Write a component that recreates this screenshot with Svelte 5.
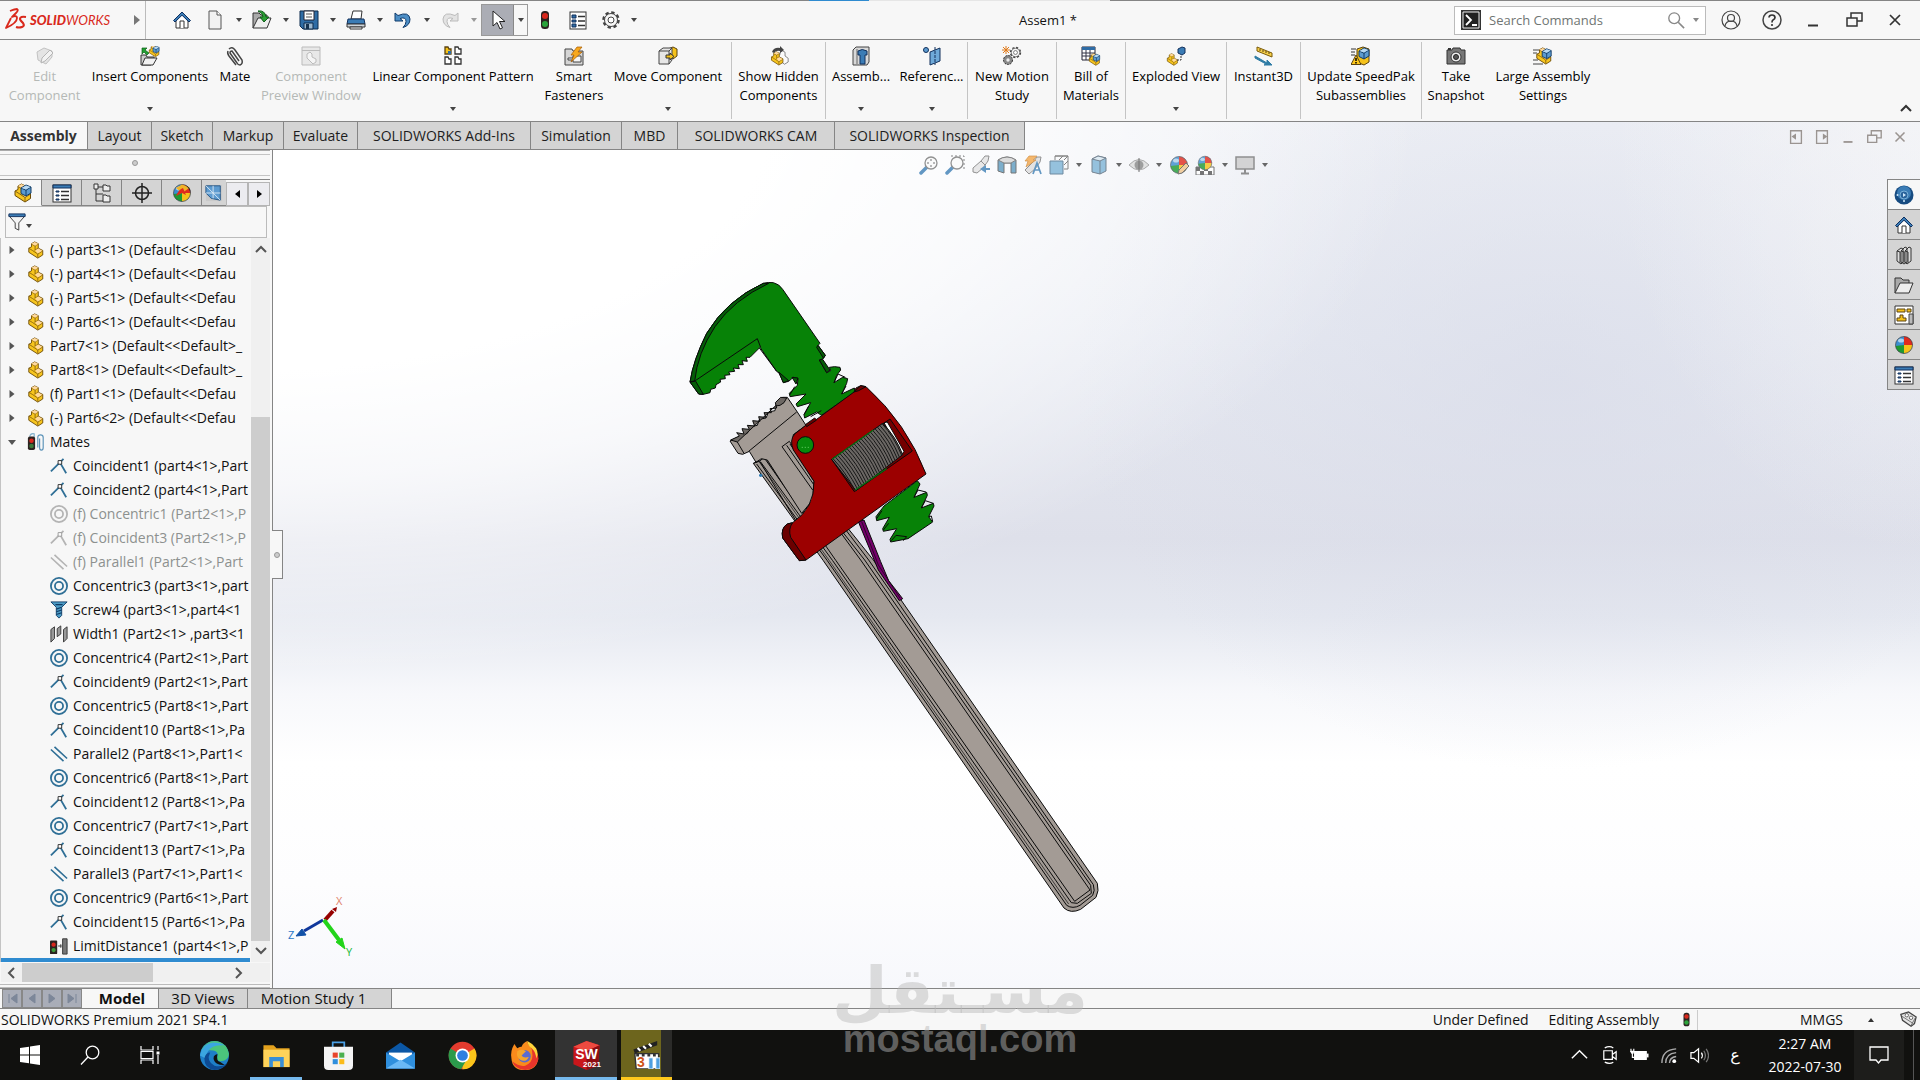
<script>
  const block =
    '<path d="M2 8l3-1.500V3l3.500-2 4 2v5l5 2.500v5L12 19 2 12.500z" fill="#f7c51e" stroke="#6b4a05"/><path d="M2 8l4 2.500 6 4v4M5 3.500l4 2v5.500M9 5.500L12.500 3M12 14.500l5.500-3.500M9 10l3.500-2" fill="none" stroke="#8a6410"/><path d="M5 3l3.500-2 4 2L9 5.200zM9 10.500l3.500-2.200 4.500 2.500-5 3.200z" fill="#ffd9a0"/>';
  const cube =
    '<path d="M8 5l5-3 5 2v6l-5 3-5-2.500z" fill="#5d9bd0" stroke="#123c66"/><path d="M8 5l5 2.200L18 4M13 7v6" fill="none" stroke="#123c66"/><path d="M8.500 5L13 2.500 17.500 4 13 6.500z" fill="#b9d9f2"/>';
  const house =
    '<path d="M4 9v9h12V9l-6-6z" fill="#fff" stroke="#333"/><path d="M8 18v-7h4v7" fill="#fff" stroke="#333"/><path d="M1.500 10.500L10 2l8.500 8.500-1.500 1.500L10 5.200 3 12z" fill="#3b7cb5" stroke="#0f3060"/>';
  const ball =
    '<circle cx="10" cy="10" r="8.500" fill="#3c8ed0"/><path d="M10 10V1.500A8.500 8.500 0 0 1 18.500 10z" fill="#e02a1e"/><path d="M10 10h8.500A8.500 8.500 0 0 1 10 18.500z" fill="#f5c21a"/><path d="M10 10v8.500A8.500 8.500 0 0 1 1.500 11z" fill="#1e9a32"/><ellipse cx="7" cy="5.500" rx="3" ry="2" fill="#fff" opacity=".6"/><circle cx="10" cy="10" r="8.500" fill="none" stroke="#444" stroke-opacity=".7"/>';
  const list =
    '<rect x="2" y="2" width="16" height="17" fill="#fff" stroke="#333"/><path d="M4 5h4v3H4zM4 10h4v2H4zM4 14h4v3H4z" fill="#2f6ca5" stroke="#12305c"/><path d="M10 6.500h7M10 11h7M10 15.500h7" stroke="#333" stroke-width="1.500"/>';
  const folder =
    '<path d="M1 18V3h6l2 2h6v3" fill="#aaa" stroke="#333"/><path d="M1 18L6 8h13l-4 10z" fill="#eee" stroke="#333"/>';
  const page = '<path d="M4 1h8l4 4v14H4z" fill="#f2f2f2" stroke="#555"/><path d="M12 1v4h4" fill="#fff" stroke="#555"/>';
  const gear =
    '<circle cx="10" cy="10" r="7.500" fill="none" stroke="#444" stroke-width="2.500" stroke-dasharray="3.300 2.590"/><circle cx="10" cy="10" r="6.500" fill="#f7f7f7" stroke="#444"/><circle cx="10" cy="10" r="3" fill="#fff" stroke="#444"/>';
  const light =
    '<rect x="6" y="1" width="8" height="18" rx="3.500" fill="#2c2320"/><circle cx="10" cy="6" r="3" fill="#d9281c"/><circle cx="10" cy="14" r="3" fill="#2aa33a"/>';
  const lens = '<path d="M8 12l-6 6" stroke="#3d7fb5" stroke-width="3.500" stroke-linecap="round"/><circle cx="12" cy="8" r="6" fill="#fafafa" stroke="#777" stroke-width="1.300"/>';

  const icons = {
    home: house,
    page,
    open: folder + '<path d="M6 1q7-1 8 6h3l-5 5-4-5h3q0-4-5-6z" fill="#2a9e34" stroke="#0d5c17"/>',
    save: '<path d="M1 1h18v18H4l-3-3z" fill="#2f6ca5" stroke="#0d2a4d"/><path d="M5 1h10v9H5z" fill="#fff" stroke="#223"/><path d="M7 4h6M7 7h6" stroke="#555"/><path d="M5 13h9v6H5z" fill="#9bb7cf" stroke="#0d2a4d"/><path d="M7 14h3v5H7z" fill="#16324f"/>',
    print: '<path d="M5 9L7 1h9l-1 8z" fill="#fff" stroke="#333"/><path d="M2 9h16l1 5H1z" fill="#3b7cb5" stroke="#12305c"/><path d="M1 14h18v3H1z" fill="#cfd6dc" stroke="#333"/><path d="M4 17h12v2H4z" fill="#fff" stroke="#333"/>',
    undo: '<path d="M2 3v8h8L7 8.500q6-2 6 3 0 3-3 6 7-2 7-8.500Q16 1 5 5.500z" fill="#4c8ec6" stroke="#0f3a6b"/>',
    redo: '<path d="M18 3v8h-8l3-2.500q-6-2-6 3 0 3 3 6-7-2-7-8.500Q4 1 15 5.500z" fill="#e3e3e3" stroke="#bbb"/>',
    cursor: '<path d="M5 1v15l4-3.500 3 6.500 2.500-1.200L11.500 11.500H17z" fill="#fff" stroke="#222"/>',
    light,
    list,
    gear,
    edit: '<path d="M2 6l7-4 8 3v6l-6 7-8-4z" fill="#e4e4e4" stroke="#c2c2c2"/><path d="M6 17l1-5 8-8 3 3-8 8z" fill="#f2f2f2" stroke="#b5b5b5"/>',
    insert: '<g transform="translate(8 -1) scale(.62)">' + block + cube + '</g><path d="M1 19V9h5l1 2h7v2l-3 6z" fill="#ccc" stroke="#333"/><path d="M2 19l3-7h12l-4 7z" fill="#f2f2f2" stroke="#333"/><path d="M2 8V2h5L5 4l4 3-2 2-3-3z" fill="#22a032" stroke="#0d5c17" stroke-width=".7"/>',
    clip: '<path d="M4 3q3-3 6 1l7 10q1 4-2 5-2 0-3-2L5 7q0-2 2-2l7 10" fill="none" stroke="#444" stroke-width="1.500"/><path d="M3 5q-1 2 1 5l7 9" fill="none" stroke="#444" stroke-width="1.500"/>',
    preview: '<path d="M1 1h18v18H1z" fill="#e8e8e8" stroke="#bbb"/><path d="M1 4.500h18" stroke="#bbb"/><path d="M6 12V8l3-2 2 2v3l4 2v3l-3 2z" fill="#f5f5f5" stroke="#bbb"/>',
    pattern: '<path d="M2 1h3l1 2h2v5H2z" fill="#f5c21a" stroke="#5b4310" stroke-width="1.300"/><path d="M12 1h3l1 2h2v5h-6zM2 11h3l1 2h2v5H2zM12 11h3l1 2h2v5h-6z" fill="#fff" stroke="#333" stroke-width="1.300"/><path d="M5 5h3v3H5z" fill="#2f6ca5"/>',
    smart: '<path d="M1 3h7l1 2h10v14H1z" fill="#d5d5d5" stroke="#444"/><path d="M4 12h5v-2h8v6H9v-2H4z" fill="#f5f5f5" stroke="#444"/><path d="M13 1h5l-4 5h4L7 16l3-7H7z" fill="#f7a81e" stroke="#a35a05" stroke-width=".7"/>',
    move: '<path d="M10 3l5-2 4 2v7l-4 3z" fill="#f5c21a" stroke="#5b4310"/><path d="M1 5l4-3h9v12l-3 4H1z" fill="#e6e6e6" stroke="#444"/><path d="M1 5h10v13M11 5l3-3" fill="none" stroke="#444"/><path d="M8 9h4V7l4 3.500-4 3.500v-2H8z" fill="#f5c21a" stroke="#333"/>',
    hidden: '<g transform="translate(8 4) scale(.62 .75)"><path d="M2 8l3-2V3l4-2 4 2v5l5 3v5L12 19 2 12z" fill="#fafafa" stroke="#555"/></g><g transform="translate(1 5) scale(.74)">' + block + '</g><path d="M3 6q2-5 8-4V0l4 4-4 3V5Q7 4 5 7z" fill="#444"/>',
    feature: '<path d="M2 4l3-3h13v15l-2 3H2z" fill="#d8d8d8" stroke="#444"/><path d="M6 3v15" stroke="#666"/><path d="M7 5q4-3 9 0v4h-2v9H9V9H7z" fill="#3b7cb5" stroke="#12305c"/>',
    reference: '<circle cx="4" cy="4" r="2.500" fill="#5d9bd0" stroke="#12305c"/><path d="M8 6l10-4v13L8 19z" fill="#6ea9d8" stroke="#12305c"/><path d="M13 1v18" stroke="#12305c" stroke-dasharray="3 1"/>',
    motion: '<g transform="translate(7 0) scale(.65)">' + gear + '</g><circle cx="6" cy="14" r="4.500" fill="#888" stroke="#333" stroke-dasharray="2 1"/><circle cx="6" cy="14" r="1.700" fill="#eee"/><path d="M4 0v8M0 4h8M1 1l6 6M7 1L1 7" stroke="#e07a1a"/>',
    bom: '<path d="M1 1h13v13H1z" fill="#fff" stroke="#223"/><path d="M1 1h13v3H1z" fill="#2f6ca5"/><path d="M1 7h13M1 10h13M5 4v10M9 4v10" stroke="#334"/><g transform="translate(7 7) scale(.65)">' + block + cube + '</g>',
    exploded: '<g transform="translate(0 7) scale(.65)">' + block + '</g><path d="M12 3l4-2 3 1v5l-3 2-4-2z" fill="#3b7cb5" stroke="#12305c"/><path d="M15 10v4h-4" fill="none" stroke="#333" stroke-dasharray="2 1"/>',
    instant: '<path d="M3 1l15 6v4L3 5z" fill="#f7d04a" stroke="#7a5a08"/><path d="M6 3v2M9 4v2M12 5v2M15 6v2" stroke="#5b4310"/><path d="M1 10l12 7v-3l5 5h-8l2-1-11-6z" fill="#2f7ca5" stroke="#2f7ca5"/>',
    speedpak: '<path d="M6 3l6-2 6 2v13l-5 3-7-3z" fill="#f5c21a" stroke="#5b4310"/>' + cube + '<path d="M0 3h5M0 6h4M0 9h4" stroke="#333"/><path d="M5 9l5 9.500H0z" fill="#ffc91c" stroke="#5b4310"/><path d="M5 12v3M5 16v1.500" stroke="#000" stroke-width="1.500"/>',
    camera: '<path d="M1 4h5l1-2h7l1 2h4v14H1z" fill="#777" stroke="#333"/><circle cx="10" cy="11" r="5" fill="#eee" stroke="#333"/><circle cx="10" cy="11" r="2.500" fill="#555" stroke="#222"/><path d="M2 2h3v2H2z" fill="#333"/>',
    large: '<path d="M0 4h6M0 7h4M0 14h5M0 18h10" stroke="#444"/><g transform="translate(2 1) scale(.9)">' + block + cube + '</g>',
    assembly: block + cube,
    part: block,
    props: '<rect x="1" y="2" width="18" height="17" fill="#fff" stroke="#333"/><path d="M1 2h18v3H1z" fill="#3b7cb5" stroke="#12305c"/><path d="M4 8h3v1H4zM4 12h3v1H4zM4 16h3v1H4z" fill="#3b7cb5" stroke="#12305c"/><path d="M9 8.500h8M9 12.500h8M9 16.500h8" stroke="#333" stroke-width="1.500"/>',
    config: '<path d="M4 1v17h7M4 4h7M4 11h7" fill="none" stroke="#333"/><path d="M2 1h4v5H2zM11 2h3l1 1h3v5h-7zM11 12h3l1 1h3v6h-7z" fill="#eee" stroke="#333"/>',
    target: '<circle cx="10" cy="10" r="6.500" fill="none" stroke="#222" stroke-width="1.500"/><path d="M10 0v20M0 10h20" stroke="#222" stroke-width="1.500"/>',
    ball,
    beach: ball + '<path d="M10 10L4 5l6-3.500 8 3z" fill="#f0b428"/><path d="M13 2q6 2 5.500 8-1-5-5.500-8z" fill="#222"/><path d="M10 10L4 13q3-7 7-8l3 7z" fill="#e02a1e"/>',
    cam: '<path d="M1 1h18v18H1z" fill="#c9c9c9"/><path d="M1 2h16v16l-10-2-6-6z" fill="#5d9bd0" stroke="#205080"/><path d="M1 10h16M9 2v14M1 2l16 16" stroke="#dcebf6"/>',
    filter: '<path d="M1 3h18l-7 8v8l-4-2v-6z" fill="#f3f3f3" stroke="#333"/><path d="M1 1h18v3H1z" fill="#3b7cb5" stroke="#12305c"/>',
    mates: '<path d="M12 16V5q0-3 3-3t3 3v11q0 3-2 3t-2-3V6" fill="none" stroke="#5c93b8" stroke-width="1.300"/><path d="M3 4q1-4 5-3v4" fill="none" stroke="#7fb0cc" stroke-width="1.300"/><rect x="1" y="4" width="8" height="15" rx="2" fill="#2c2320"/><circle cx="5" cy="8.500" r="2.500" fill="#d9281c"/><circle cx="5" cy="14.500" r="2.500" fill="#3c7a3a"/>',
    coincident: '<path d="M1 16L15 2M11 6l7 12" stroke="#2f6f96" stroke-width="2"/><path d="M9 4h4v4H9z" fill="#fff" stroke="#222"/>',
    concentric: '<circle cx="10" cy="10" r="9" fill="none" stroke="#2f6f96" stroke-width="2"/><circle cx="10" cy="10" r="4.500" fill="none" stroke="#2f6f96" stroke-width="2"/>',
    parallel: '<path d="M5 2l14 13M1 5l14 13" stroke="#2f6f96" stroke-width="1.800"/>',
    screw: '<path d="M1 1h18l-6 6v9l-3 3-3-3V7z" fill="#4c9cc6" stroke="#103c66"/><path d="M6 4h8M7 9l6-2M7 12l6-2M7 15l6-2" stroke="#103c66" stroke-width="1.300"/>',
    width: '<path d="M1 5l4-3v13l-4 4zM15 5l4-3v13l-4 4zM8 4l4-3v9l-4 3z" fill="#999" stroke="#333"/>',
    limit: '<rect x="0" y="4" width="8" height="15" rx="1" fill="#2c2320"/><circle cx="4" cy="8.500" r="2.400" fill="#d9281c"/><circle cx="4" cy="14.500" r="2.400" fill="#3c9a3a"/><path d="M9 10h4M12 8v4M14 2h5v17h-5z" fill="#777" stroke="#333"/>',
    zoomfit: lens + '<path d="M12 4v8M8 8h8" stroke="#555" stroke-dasharray="2 4"/>',
    zoomarea: '<path d="M6 1h13v14" fill="none" stroke="#666" stroke-dasharray="2 2"/>' + lens,
    prev: '<path d="M2 13l8-7 4-5h4l-1 5-5 7-6 5-4-1z" fill="#e3e3e3" stroke="#777"/><path d="M10 6l4 4" stroke="#777"/><path d="M19 15h-4v3l-6-4 6-4v3h4z" fill="#3d7fb5"/>',
    section: '<path d="M1 5q9-6 18 0v13h-5V8H7v10l-6-2z" fill="#5d9bc0" stroke="#555"/><path d="M1 5q9-6 18 0l-5 3H7z" fill="#d6d6d6" stroke="#666"/>',
    annot: '<path d="M2 15l8-8 4-5h4l-1 5-5 7-6 5z" fill="#ddd" stroke="#777"/><path d="M6 1h8l-4 4h3L3 12l2-6H2z" fill="#f3a74a" stroke="#c77a20" stroke-width=".7"/><path d="M10 19l4-11 4 11M12 15h5" fill="none" stroke="#3d7fb5" stroke-width="1.700"/>',
    orient: '<path d="M6 5V1h13v13h-4M6 1l13 0M10 5l4-4M15 10l4-4M15 5l4-4" fill="none" stroke="#666" /><path d="M1 6h13v13H1z" fill="#7db4d6" stroke="#4d6f88"/>',
    style: '<path d="M3 4l6-3 8 2v13l-6 3-8-2z" fill="#7db4d6" stroke="#567"/><path d="M3 4l8 2 6-3-8-2z" fill="#d8e8f2" stroke="#567"/><path d="M11 6v13" stroke="#567"/>',
    eye: '<path d="M0 10q10-11 20 0-10 10-20 0z" fill="#ddd" stroke="#999"/><circle cx="10" cy="10" r="4.500" fill="#888"/><path d="M10 3v14" stroke="#555"/>',
    appear: ball + '<path d="M9 19l1-4 7-7 3 3-7 7z" fill="#f1c58a" stroke="#555"/>',
    scene: '<path d="M1 12h18v8H1z" fill="#fff" stroke="#555"/><path d="M1 12h4v4H1zM9 12h4v4H9zM5 16h4v4H5zM13 16h4v4h-4z" fill="#555"/><g transform="translate(2 0) scale(.8)">' + ball + '</g>',
    monitor: '<path d="M1 2h18v12H1z" fill="#ccc" stroke="#777" stroke-width="1.500"/><path d="M10 14v4M6 18.500h8" stroke="#777" stroke-width="2"/>',
    user: '<circle cx="10" cy="10" r="9" fill="none" stroke="#444" stroke-width="1.200"/><circle cx="10" cy="8" r="3.500" fill="none" stroke="#444" stroke-width="1.200"/><path d="M4 16q1-5 6-5t6 5" fill="none" stroke="#444" stroke-width="1.200"/>',
    help: '<circle cx="10" cy="10" r="9" fill="none" stroke="#444" stroke-width="1.500"/><path d="M7 7.500Q7.200 5 10 5t3 2.500Q13 9 11 10q-1 .5-1 2.500" fill="none" stroke="#333" stroke-width="1.700"/><circle cx="10" cy="15" r="1.100" fill="#333"/>',
    min: '<path d="M5 15.500h10" stroke="currentColor" stroke-width="2"/>',
    restore: '<path d="M7 8V3h11v8h-5M3 8h10v8H3z" fill="none" stroke="currentColor" stroke-width="1.500"/>',
    close: '<path d="M5 5l10 10M15 5L5 15" stroke="currentColor" stroke-width="1.700"/>',
    paneL: '<path d="M4 3h12v14H4z" fill="none" stroke="currentColor" stroke-width="1.500"/><path d="M10 6v7L5 9.500z" fill="currentColor"/>',
    paneR: '<path d="M4 3h12v14H4z" fill="none" stroke="currentColor" stroke-width="1.500"/><path d="M11 6v7l5-3.500z" fill="currentColor"/>',
    globe: '<circle cx="10" cy="10" r="9.500" fill="#164b80"/><circle cx="10" cy="8" r="7" fill="#3b7cb5"/><circle cx="10" cy="10" r="4" fill="#2a639b" stroke="#79b0d8"/><path d="M9 8v4l3-2z" fill="#cfe8fa"/><circle cx="10" cy="16" r="1" fill="#cfe8fa"/><circle cx="3.500" cy="10" r="1" fill="#cfe8fa"/>',
    books: '<path d="M3 6l4-3 2 1v13l-2 2-4-3zM7 6l4-4 2 1v14l-3 2-3-2zM11 6l4-4 2 1v13l-4 3-2-2z" fill="#ddd" stroke="#333"/><path d="M3 6l3 1v11M7 6l3 1v11M11 6l3 1v11" fill="none" stroke="#333"/>',
    folder,
    palette: '<path d="M1 1h18v18H1z" fill="#fff" stroke="#333"/><path d="M3 4h8v3H3zM13 4h4v3h-4zM3 16v-3h3v-3h3v3h3v3z" fill="#f5c21a" stroke="#5b4310"/><path d="M15 9h4v10h-4z" fill="#bbb" stroke="#444"/>',
    term: '<path d="M0 0h20v20H0z" fill="#333"/><path d="M2 2h16v16H2z" fill="#222" stroke="#eee"/><path d="M5 5l5 5-5 5M11 15h5" fill="none" stroke="#fff" stroke-width="1.800"/>',
    search: '<circle cx="8" cy="8" r="6" fill="none" stroke="#888" stroke-width="1.500"/><path d="M12.500 12.500L19 19" stroke="#888" stroke-width="1.800"/>',
    tag: '<path d="M1 4l9-3 9 6-2 8-4 3-10-7z" fill="#e4e4e4" stroke="#444" stroke-width="1.500"/><path d="M2 6l14 9M13 17l5-9" stroke="#666"/><circle cx="8" cy="5" r="2" fill="#fff" stroke="#555"/><circle cx="13" cy="8" r="2" fill="#fff" stroke="#555"/>',
    tSearch: '<circle cx="12.500" cy="7.500" r="6.300" fill="none" stroke="#fff" stroke-width="1.300"/><path d="M8 12l-7 7.500" stroke="#fff" stroke-width="1.300"/>',
    win: '<path d="M0 3l9-1.300V9.500H0zM10 1.500L20 0v9.500H10zM0 10.500h9v7.800L0 17zM10 10.500h10V20l-10-1.500z" fill="#fff"/>',
    tview: '<path d="M1 1v4h12V1M1 19v-4h12v4M1 6.500h12v7H1zM18 1v4M18 10v9" fill="none" stroke="#fff" stroke-width="1.200"/><path d="M16.500 6.500h3v3h-3z" fill="#fff"/>',
    edge: '<circle cx="10" cy="10" r="10" fill="#1e7fc8"/><path d="M1 6Q5-1 12 .2 19 2 20 9q-.5 5-6 5-3-.5-2-3 1-4-3-4.500Q4 6 1 6z" fill="#4bc57c"/><path d="M0 10Q1 2 9 1q5 0 8 2-12-1-13 9z" fill="#3ba6e0"/><path d="M7 8q-3 6 3 9 5 1.500 9-2-3 5-9 5-7-1-7-8 1-4 4-4z" fill="#0d4a92"/><path d="M12 9q-4 1-2 5 2 3 7 2.500l-3-2q-3-.5-2-5.500z" fill="#111"/>',
    explorer: '<path d="M1 3h7l2 2h9v13H1z" fill="#e3a11d"/><path d="M1 6h18v12H1z" fill="#ffd35a"/><path d="M5 18v-7h10v7h-2.500v-4h-5v4z" fill="#3a8fd6"/>',
    store: '<path d="M6 5V1h8v4" fill="none" stroke="#4aa0e6" stroke-width="1.200"/><path d="M0 4h20v13q0 3-3 3H3q-3 0-3-3z" fill="#f4f4f4"/><path d="M6 8h3.500v3.500H6z" fill="#e8452c"/><path d="M10.500 8H14v3.500h-3.500z" fill="#4cb050"/><path d="M6 12.500h3.500V16H6z" fill="#2f8fdd"/><path d="M10.500 12.500H14V16h-3.500z" fill="#fbbc1a"/>',
    mail: '<path d="M0 8l10-7 10 7v11H0z" fill="#0b57a5"/><path d="M2 8h16v8H2z" fill="#fff"/><path d="M0 8l10 6 10-6v11H0z" fill="#2f8fdd"/><path d="M0 19l10-6 10 6z" fill="#6ab8f5"/>',
    chrome: '<circle cx="10" cy="10" r="9.500" fill="#e33b2e"/><path d="M10 10l8.300-4.800A9.500 9.500 0 0 1 10 19.500z" fill="#fbc51a"/><path d="M10 10L1.700 5.200A9.500 9.500 0 0 0 9 19.500l4-7z" fill="#2b9a4b"/><circle cx="10" cy="10" r="4.800" fill="#fff"/><circle cx="10" cy="10" r="3.700" fill="#2f7fe0"/>',
    firefox: '<path d="M1 12Q0 7 3 2l2 3q2-1 3-1 1-3 4-4 0 3 4 5 3 3 3.500 7-1 8-9.500 8T1 12z" fill="#f98b1c"/><path d="M14 3q6 4 5.500 10-2 7-9 7-7-.5-9-6 5 4 9 3 5-2 5-7 0-4-1.500-7z" fill="#e8352b"/><path d="M12 0q0 3 3 5 3 3 3 7 2-3 0-7-2-3-6-5z" fill="#ffd43a"/><circle cx="10" cy="10.500" r="4.300" fill="#5b6bd0"/><path d="M5 7q3-2 6 0l-3 3q1 2 5 1-2 4-6 2-3-2-2-6z" fill="#f7a62a"/>',
    sw: '<path d="M1 4l9-4 9 3-1 14-8 3-9-4z" fill="#c9161b"/><path d="M1 4l9 3 9-4-9-3z" fill="#ee4a40"/><path d="M10 7l9-4-1 14-8 3z" fill="#8d0d12"/>',
    clapper: '<path d="M2 9h17v11H3z" fill="#fff" stroke="#333"/><path d="M1 6l17-6v3L2 9z" fill="#222"/><path d="M4 5l2 2M8 3.500l2 2M12 2l2 2" stroke="#fff" stroke-width="1.500"/><path d="M3 10h15" stroke="#333" stroke-dasharray="2 2" stroke-width="2"/><path d="M12 12h3v8h-3zM17 12h3v8h-3z" fill="#4d9fe0" stroke="#fff" stroke-width=".6"/>',
    up: '<path d="M2 13l8-8 8 8" fill="none" stroke="#fff" stroke-width="1.500"/>',
    meet: '<path d="M4 5h9v9H4zM13 9l4-3v8l-4-3M5 2q5-2.500 9 0M5 17q5 2.500 9 0" fill="none" stroke="#fff" stroke-width="1.300"/>',
    battery: '<path d="M5 6h12v8H5z" fill="#fff" stroke="#fff" stroke-width="1.500"/><path d="M18.500 8v4" stroke="#fff" stroke-width="2"/><path d="M0 6h5M1 3v3M4 3v3M2.500 6v6h3" fill="none" stroke="#fff" stroke-width="1.200"/><path d="M1 5h3v3H1z" fill="#fff"/>',
    wifi: '<path d="M2 18Q2 4 17 3M6 18Q6 8 17 7M10 18q0-6 7-7" fill="none" stroke="#aaa" stroke-width="1.500"/><circle cx="15" cy="16" r="2" fill="#fff"/>',
    vol: '<path d="M1 7h3l5-4v14l-5-4H1z" fill="none" stroke="#fff" stroke-width="1.300"/><path d="M12 7q2 3 0 6" fill="none" stroke="#fff" stroke-width="1.300"/><path d="M14.500 5q3.500 5 0 10M17 3q5 7 0 14" fill="none" stroke="#777" stroke-width="1.300"/>',
    note: '<path d="M1 2h18v13h-7l-2.500 3L7 15H1z" fill="none" stroke="#fff" stroke-width="1.300"/>'
  };

  const quick = [
    ['home', 'Home', false], ['page', 'New', true], ['open', 'Open', true], ['save', 'Save', true],
    ['print', 'Print', true], ['undo', 'Undo', true], ['redo', 'Redo', true]
  ];

  const ribbon = [
    [
      { i: 'edit', t: ['Edit', 'Component'], w: 89, off: true },
      { i: 'insert', t: ['Insert Components'], w: 122, more: true },
      { i: 'clip', t: ['Mate'], w: 48 },
      { i: 'preview', t: ['Component', 'Preview Window'], w: 104, off: true },
      { i: 'pattern', t: ['Linear Component Pattern'], w: 180, more: true },
      { i: 'smart', t: ['Smart', 'Fasteners'], w: 62 },
      { i: 'move', t: ['Move Component'], w: 126, more: true }
    ],
    [{ i: 'hidden', t: ['Show Hidden', 'Components'], w: 93 }],
    [
      { i: 'feature', t: ['Assemb...'], w: 70, more: true },
      { i: 'reference', t: ['Referenc...'], w: 71, more: true }
    ],
    [{ i: 'motion', t: ['New Motion', 'Study'], w: 88 }],
    [{ i: 'bom', t: ['Bill of', 'Materials'], w: 68 }],
    [{ i: 'exploded', t: ['Exploded View'], w: 100, more: true }],
    [{ i: 'instant', t: ['Instant3D'], w: 73 }],
    [{ i: 'speedpak', t: ['Update SpeedPak', 'Subassemblies'], w: 120 }],
    [
      { i: 'camera', t: ['Take', 'Snapshot'], w: 68 },
      { i: 'large', t: ['Large Assembly', 'Settings'], w: 106 }
    ]
  ];

  const tabs = [
    ['Assembly', 88], ['Layout', 64], ['Sketch', 61], ['Markup', 71], ['Evaluate', 74],
    ['SOLIDWORKS Add-Ins', 173], ['Simulation', 91], ['MBD', 56], ['SOLIDWORKS CAM', 157], ['SOLIDWORKS Inspection', 190]
  ];

  const parts = [
    '(-) part3<1> (Default<<Defau', '(-) part4<1> (Default<<Defau', '(-) Part5<1> (Default<<Defau',
    '(-) Part6<1> (Default<<Defau', 'Part7<1> (Default<<Default>_', 'Part8<1> (Default<<Default>_',
    '(f) Part1<1> (Default<<Defau', '(-) Part6<2> (Default<<Defau'
  ];

  const mates = [
    ['coincident', 'Coincident1 (part4<1>,Part'],
    ['coincident', 'Coincident2 (part4<1>,Part'],
    ['concentric', '(f) Concentric1 (Part2<1>,P', true],
    ['coincident', '(f) Coincident3 (Part2<1>,P', true],
    ['parallel', '(f) Parallel1 (Part2<1>,Part', true],
    ['concentric', 'Concentric3 (part3<1>,part'],
    ['screw', 'Screw4 (part3<1>,part4<1'],
    ['width', 'Width1 (Part2<1> ,part3<1'],
    ['concentric', 'Concentric4 (Part2<1>,Part'],
    ['coincident', 'Coincident9 (Part2<1>,Part'],
    ['concentric', 'Concentric5 (Part8<1>,Part'],
    ['coincident', 'Coincident10 (Part8<1>,Pa'],
    ['parallel', 'Parallel2 (Part8<1>,Part1<'],
    ['concentric', 'Concentric6 (Part8<1>,Part'],
    ['coincident', 'Coincident12 (Part8<1>,Pa'],
    ['concentric', 'Concentric7 (Part7<1>,Part'],
    ['coincident', 'Coincident13 (Part7<1>,Pa'],
    ['parallel', 'Parallel3 (Part7<1>,Part1<'],
    ['concentric', 'Concentric9 (Part6<1>,Part'],
    ['coincident', 'Coincident15 (Part6<1>,Pa'],
    ['limit', 'LimitDistance1 (part4<1>,P']
  ];

  const view = [
    ['zoomfit'], ['zoomarea'], ['prev'], ['section'], ['annot'], ['orient', true], ['style', true],
    ['eye', true], ['appear'], ['scene', true], ['monitor', true]
  ];

  const side = ['globe', 'home', 'books', 'folder', 'palette', 'ball', 'props'];
  const panelTabs = ['assembly', 'props', 'config', 'target', 'beach'];
  const pinned = ['edge', 'explorer', 'store', 'mail', 'chrome', 'firefox'];

  // Knurling lines across the adjusting nut
  const knurl = Array.from({ length: 22 }, (_, i) => {
    const x = 519 + i * 7;
    const y = 596 - i * 5;
    return `M${x} ${y}q36 38 ${66 - Math.round(i / 3)} 95`;
  }).join('');
</script>

{#snippet icon(name, size = 20)}
  <svg class="ic" width={size} height={size} viewBox="0 0 20 20" aria-hidden="true">{@html icons[name]}</svg>
{/snippet}

{#snippet caret()}
  <svg class="caret" width="6" height="4" viewBox="0 0 6 4" aria-hidden="true"><path d="M0 0h6L3 4z" fill="currentColor" /></svg>
{/snippet}

<div class="app">
  <header class="title">
    <div class="brand">
      <svg width="24" height="26" viewBox="0 0 24 26" aria-hidden="true">
        <path d="M6 4q5-2 7-2 2 1-1 4l-4 4q5-2 5 1 0 5-11 10l5-10" fill="none" stroke="#d9291c" stroke-width="1.800" stroke-linejoin="round" />
        <path d="M22 10q-6-1-6 2 0 1 3 4 2 3-1 4-3 1-6 0" fill="none" stroke="#d9291c" stroke-width="2.200" />
      </svg>
      <span class="word"><b>SOLID</b>WORKS</span>
    </div>
    <button class="expand" aria-label="Show menu"><svg width="6" height="10" viewBox="0 0 6 10"><path d="M0 0l6 5-6 5z" fill="#777" /></svg></button>
    <nav class="quick" aria-label="Quick access">
      {#each quick as [name, label, more]}
        <button class:faded={name === 'redo'} aria-label={label}>{@render icon(name)}</button>
        {#if more}<button class="drop" class:faded={name === 'redo'} aria-label={`${label} options`}>{@render caret()}</button>{/if}
      {/each}
      <div class="select">
        <button aria-label="Select">{@render icon('cursor')}</button>
        <button aria-label="Select options">{@render caret()}</button>
      </div>
      <div class="tools">
        <button aria-label="Rebuild">{@render icon('light')}</button>
        <button aria-label="File properties">{@render icon('list')}</button>
        <button aria-label="Options">{@render icon('gear')}</button>
      </div>
      <button class="last" aria-label="More options">{@render caret()}</button>
    </nav>
    <h1>Assem1 *</h1>
    <div class="right">
      <div class="find">
        {@render icon('term')}
        <input type="text" placeholder="Search Commands" aria-label="Search Commands" />
        {@render icon('search', 18)}
        {@render caret()}
      </div>
      <div class="win">
        <button aria-label="Account">{@render icon('user')}</button>
        <button aria-label="Help">{@render icon('help')}</button>
        <button aria-label="Minimize">{@render icon('min')}</button>
        <button aria-label="Restore">{@render icon('restore')}</button>
        <button aria-label="Close">{@render icon('close')}</button>
      </div>
    </div>
    <div class="edge"><i></i><b></b></div>
  </header>

  <section class="ribbon" aria-label="Assembly commands">
    {#each ribbon as group}
      <div class="group">
        {#each group as item}
          <button class="cmd" style:width={`${item.w}px`} disabled={item.off}>
            {@render icon(item.i)}
            <span class="lines">{#each item.t as line}<span>{line}</span>{/each}</span>
            {#if item.more}{@render caret()}{/if}
          </button>
        {/each}
      </div>
    {/each}
    <button class="collapse" aria-label="Collapse ribbon"><svg width="12" height="8" viewBox="0 0 12 8"><path d="M1 7l5-5 5 5" fill="none" stroke="#333" stroke-width="2" /></svg></button>
  </section>

  <main class="work">
    <div class="tabrow">
      <div class="tabs" role="tablist">
        {#each tabs as [name, w], n}
          <button role="tab" aria-selected={n === 0} class:on={n === 0} style:width={`${w}px`}>{name}</button>
        {/each}
      </div>
      <div class="mdi">
        {#each ['paneL', 'paneR', 'min', 'restore', 'close'] as name}
          <button aria-label={name}>{@render icon(name, 18)}</button>
        {/each}
      </div>
    </div>

    <div class="body">
      <aside class="panel">
        <div class="grip"><i></i></div>
        <div class="ptabs">
          {#each panelTabs as name, n}
            <button class:on={n === 0} aria-label={name}>{@render icon(name)}</button>
          {/each}
          <button class="cut" aria-label="cam">{@render icon('cam', 18)}</button>
          <button class="arrow" aria-label="Scroll left"><svg width="5" height="8" viewBox="0 0 5 8"><path d="M5 0v8L0 4z" /></svg></button>
          <button class="arrow" aria-label="Scroll right"><svg width="5" height="8" viewBox="0 0 5 8"><path d="M0 0v8l5-4z" /></svg></button>
        </div>
        <button class="filter" aria-label="Filter">{@render icon('filter', 18)}{@render caret()}</button>
        <div class="treewrap">
          <ul class="tree">
            {#each parts as p}
              <li><svg class="tw" width="5" height="8" viewBox="0 0 5 8"><path d="M0 0v8l5-4z" fill="#555" /></svg>{@render icon('part', 18)}<span>{p}</span></li>
            {/each}
            <li><svg class="tw" width="8" height="5" viewBox="0 0 8 5"><path d="M0 0h8L4 5z" fill="#555" /></svg>{@render icon('mates', 18)}<span>Mates</span></li>
            {#each mates as [ic, text, off]}
              <li class="mate" class:off>{@render icon(ic, 18)}<span>{text}</span></li>
            {/each}
          </ul>
          <div class="vbar">
            <svg width="12" height="8" viewBox="0 0 12 8"><path d="M1 7l5-5 5 5" fill="none" stroke="#555" stroke-width="2" /></svg>
            <i></i>
            <svg width="12" height="8" viewBox="0 0 12 8"><path d="M1 1l5 5 5-5" fill="none" stroke="#555" stroke-width="2" /></svg>
          </div>
        </div>
        <div class="hbar">
          <svg width="8" height="12" viewBox="0 0 8 12"><path d="M7 1L2 6l5 5" fill="none" stroke="#555" stroke-width="2" /></svg>
          <i></i>
          <svg width="8" height="12" viewBox="0 0 8 12"><path d="M1 1l5 5-5 5" fill="none" stroke="#555" stroke-width="2" /></svg>
        </div>
      </aside>

      <div class="viewport">
        <div class="handle"><i></i></div>
        <div class="hud">
          {#each view as [name, more]}
            <button aria-label={name}>{@render icon(name)}</button>
            {#if more}<button class="mini" aria-label={`${name} options`}>{@render caret()}</button>{/if}
          {/each}
        </div>

        <svg class="wrench" width="440" height="660" viewBox="0 0 1320 1980" role="img" aria-label="Pipe wrench assembly">
          <g stroke="#0a0a0a" stroke-width="3" stroke-linejoin="round">
            <path d="M280 610L298 604 435 495 560 800 640 900 1312 1870Q1318 1892 1308 1912L1262 1948Q1232 1962 1212 1944L490 902z" fill="#a39b95" />
            <path d="M290 612L502 902 1220 1936Q1238 1948 1260 1936L1298 1906Q1306 1892 1300 1874L626 900 550 800M302 606L518 902 1234 1928 1252 1930 1294 1900 1292 1876 614 900 540 806M316 598L428 758 528 902 1244 1924 1290 1890 602 900 536 810" fill="none" />
            <path d="M298 606L508 902 1226 1932M322 604L435 762" fill="none" stroke-width="2" />
            <path d="M595 785L612 780 662 905 686 962 728 1016 718 1022 655 930z" fill="#74006b" />
            <path d="M605 785L655 915 720 1014" fill="none" stroke-width="2" />
            <path d="M210 543L232 532 262 520 272 500 292 496 298 478 318 474 326 456 345 452 350 424 368 412 382 412 412 456 438 496 400 524 396 556 462 664 458 720 425 760 322 600 304 596 288 607 268 574 248 583 234 580z" fill="#a39b95" />
            <path d="M410 456L266 574M232 546L252 580M280 610L298 602 410 786" fill="none" />
            <path d="M212 540L238 528 230 518 252 522 246 506 268 508 262 496 284 498 278 482 300 484 296 470 318 472 312 458 334 458 330 446 350 444 346 428 362 412 380 414 372 428 360 436 346 438 232 546z" fill="#6d6864" />
            <path d="M458 690L366 560 388 544 462 650M460 672L380 556M462 660L390 552" fill="none" />
            <path d="M340 68Q358 72 368 88L480 250 474 256 496 286 490 296 478 300 500 338 512 332 508 322 524 320 540 322 542 330 530 346 522 368 548 352 563 356 560 370 545 402 583 384 585 396 484 466 470 456 434 474 432 464 452 428 412 440 408 432 438 402 390 410 388 400 412 376 414 356 400 352 386 364 370 368 358 340 350 334 300 262 270 292 258 292 262 304 246 302 250 314 234 314 238 326 220 324 224 334 206 336 210 344 194 346 196 356 180 358 182 366 168 374 166 384 152 388 150 398 130 403 116 402 90 366Q100 300 140 220 200 120 310 70 325 66 340 68z" fill="#078207" />
            <path d="M90 366L106 362 130 403 116 402zM90 366Q100 300 140 220 200 120 310 70L326 70Q220 120 165 200 112 280 104 364z" fill="#055c08" />
            <path d="M106 362L292 236 302 262M298 264L350 334M522 368L534 342 556 352M432 464L446 438M390 404L404 380M545 402L558 378M452 470L484 452" fill="none" />
            <path d="M474 256L496 286 490 294 470 262zM356 336L386 362 370 368zM396 352L414 354 408 372zM478 300L500 338 510 330 488 298z" fill="#055c08" />
            <path d="M772 662L780 672 762 712 800 697 802 706 784 744 820 730 822 738 806 770 818 786 744 836 692 846 690 838 710 806 670 814 668 806 688 772 650 782 648 770 672 738z" fill="#078207" />
            <path d="M762 712L774 690 798 696M784 744L796 722 820 730M650 776L666 752M670 810L686 790M694 842L708 826 740 830 730 842M806 770L814 768 818 784" fill="none" />
            <path d="M582 396L588 384 602 377 618 380Q740 490 798 642L438 900 418 902 368 834Q362 804 382 792L398 788Q464 744 462 664L400 570Q388 540 404 522L440 494 470 478z" fill="#9c0000" />
            <path d="M582 396L602 377 618 380 596 392zM368 834Q362 804 382 792L398 788Q384 806 392 832L438 900 418 902zM436 494L464 474 470 480 440 500z" fill="#6b0000" />
            <path d="M515 598L690 477 757 573 583 695z" fill="#740000" />
            <path d="M672 488L682 486 732 574 726 584z" fill="#fff" />
            <path d="M515 598L668 490Q708 530 728 584L588 692z" fill="#6a6663" />
          </g>
          <path d={knurl} fill="none" stroke="#161616" stroke-width="3" />
          <path d="M517 597L640 510M585 690L680 626" stroke="#0a6a10" stroke-width="4" />
          <circle cx="436" cy="555" r="25" fill="#078a0c" stroke="#0a0a0a" stroke-width="3" />
          <path d="M425 562h24" stroke="#55c455" stroke-width="3" stroke-dasharray="4 5" />
          <circle cx="302" cy="646" r="5" fill="#2a78b0" />
        </svg>

        <svg class="triad" width="72" height="64" viewBox="0 0 72 64" role="img" aria-label="Orientation axes">
          <path d="M37 24L45 15" stroke="#960000" stroke-width="4" /><path d="M44 13l5-2-1 5z" fill="#960000" />
          <path d="M35 24L16 35" stroke="#10389c" stroke-width="3" /><path d="M8 40l6-7 4 6z" fill="#1252a8" stroke="#1252a8" />
          <path d="M36 24L51 44" stroke="#22d41a" stroke-width="4" /><path d="M57 53l-9-7 6-4z" fill="#22d41a" stroke="#22d41a" />
          <text x="48" y="9" fill="#e0826a">X</text><text x="0" y="43" fill="#2a78c8">Z</text><text x="58" y="60" fill="#22b83a">Y</text>
        </svg>

        <div class="side">
          {#each side as name, n}
            <button class:on={n === 0} aria-label={`Task pane ${name}`}>{@render icon(name)}</button>
          {/each}
        </div>
      </div>
    </div>
  </main>

  <nav class="sheets" aria-label="Studies">
    <div class="steps">
      {#each ['M6 2v9M14 2v9L8 6.500z', 'M12 2v9L6 6.500z', 'M6 2v9l6-4.500z', 'M13 2v9M5 2v9l6-4.500z'] as d, n}
        <button aria-label={`Step ${n + 1}`}><svg width="18" height="13" viewBox="0 0 18 13"><path {d} fill="#7d8799" stroke="#7d8799" /></svg></button>
      {/each}
    </div>
    <button class="sheet on">Model</button>
    <button class="sheet views">3D Views</button>
    <button class="sheet study">Motion Study 1</button>
  </nav>

  <footer class="status">
    <span class="product">SOLIDWORKS Premium 2021 SP4.1</span>
    <span class="st">Under Defined</span>
    <span class="st">Editing Assembly</span>
    {@render icon('light', 15)}
    <span class="units">MMGS</span>
    <svg class="rise" width="6" height="4" viewBox="0 0 6 4"><path d="M0 4h6L3 0z" fill="#333" /></svg>
    {@render icon('tag', 17)}
  </footer>

  <div class="taskbar">
    <button class="sys" aria-label="Start">{@render icon('win')}</button>
    <button class="sys" aria-label="Search">{@render icon('tSearch')}</button>
    <button class="sys" aria-label="Task view">{@render icon('tview')}</button>
    {#each pinned as name}
      <button class="pin" class:open={name === 'explorer'} aria-label={name}>{@render icon(name, 29)}</button>
    {/each}
    <button class="pin active" aria-label="SOLIDWORKS 2021">
      {@render icon('sw', 29)}
      <span class="badge"><b>SW</b><em>2021</em></span>
    </button>
    <button class="pin clip" aria-label="Movie maker">{@render icon('clapper', 28)}<span class="num">3</span></button>
    <div class="tray">
      {#each ['up', 'meet', 'battery', 'wifi', 'vol'] as name}
        <button aria-label={name}>{@render icon(name, 19)}</button>
      {/each}
      <span class="lang" lang="ar">ع</span>
      <time>2:27 AM<br />2022-07-30</time>
      <button class="note" aria-label="Notifications">{@render icon('note')}</button>
    </div>
  </div>

  <div class="mark" aria-hidden="true">
    <span class="name" lang="ar">مسـتقل</span>
    <span class="site">mostaql.com</span>
  </div>
</div>

<style>
  :global(body) { margin: 0; }
  .app {
    position: relative;
    min-height: 100vh;
    display: flex;
    flex-direction: column;
    overflow: hidden;
    background: #f7f7f7;
    color: #111;
    font: 14px/20px "Open Sans", "Noto Sans", sans-serif;
  }
  button {
    border: 0;
    padding: 0;
    margin: 0;
    background: none;
    color: inherit;
    font: inherit;
    display: flex;
    align-items: center;
    justify-content: center;
    flex: none;
  }
  svg { display: block; flex: none; }
  .caret { color: #444; }

  .title {
    position: relative;
    display: flex;
    align-items: center;
    height: 38px;
    border-top: 1px solid #858585;
    border-bottom: 1px solid #858585;
  }
  .edge { position: absolute; top: -1px; left: 809px; display: flex; height: 1px; }
  .edge i { width: 60px; background: #2f8bd0; }
  .edge b { width: 241px; background: #e6e6e6; }
  .brand { display: flex; align-items: center; gap: 2px; width: 134px; padding-left: 4px; box-sizing: border-box; color: #d9291c; }
  .word { font: italic 13px/20px Lato, "Open Sans", sans-serif; }
  .word b { font-weight: 900; }
  .expand { width: 12px; height: 38px; padding-right: 6px; border-right: 1px solid #bbb; box-sizing: border-box; }
  .quick { display: flex; align-items: center; padding-left: 24px; }
  .quick > button { width: 24px; height: 30px; }
  .quick > button:first-child { margin-right: 9px; }
  .quick > .drop { width: 23px; }
  .quick > .last { width: 14px; }
  .faded .caret { color: #999; }
  .select { display: flex; height: 32px; margin-left: -4px; border: 1px solid #999; box-sizing: border-box; }
  .select button { width: 13px; }
  .select button:first-child { width: 32px; background: #abadb5; border-right: 1px solid #888; }
  .tools { display: flex; }
  .tools button { width: 33px; height: 30px; }
  h1 { position: absolute; left: 50%; margin: 0; padding-left: 59px; font-size: 13px; font-weight: 400; line-height: 20px; }
  .right { display: flex; align-items: center; margin-left: auto; gap: 4px; padding-right: 5px; }
  .find { display: flex; align-items: center; gap: 8px; width: 252px; height: 29px; padding: 0 6px; border: 1px solid #bbb; background: #fff; box-sizing: border-box; }
  .find .caret { color: #888; }
  .find input { flex: 1; min-width: 0; padding: 0; border: 0; background: none; font: 13px/20px "Open Sans", sans-serif; color: #555; outline: 0; }
  .find input::placeholder { color: #6f7573; }
  .win { display: flex; color: #333; }
  .win button { width: 41px; height: 30px; }

  .ribbon { position: relative; display: flex; height: 81px; border-bottom: 1px solid #858585; font-size: 13px; line-height: 19px; }
  .group { display: flex; border-right: 1px solid #c4c4c4; margin: 2px 0; }
  .group:nth-last-child(2) { border: 0; }
  .cmd { flex-direction: column; justify-content: flex-start; padding-top: 4px; white-space: nowrap; color: #000; }
  .cmd:disabled { color: #b5b9b6; }
  .lines { display: flex; flex-direction: column; align-items: center; height: 38px; padding-top: 1px; }
  .cmd > .caret { margin-top: 2px; }
  .collapse { margin-left: auto; align-self: flex-end; width: 28px; height: 26px; }

  .work {
    flex: 1;
    display: flex;
    flex-direction: column;
    background:
      radial-gradient(ellipse 62% 64% at 12% 0%, #fff 45%, rgba(255, 255, 255, 0.75) 65%, rgba(255, 255, 255, 0) 100%),
      radial-gradient(ellipse 16% 50% at 100% 0%, rgba(245, 245, 247, 0.7), rgba(245, 245, 247, 0)),
      radial-gradient(ellipse 25% 45% at 81% 30%, rgba(217, 220, 233, 0.7), rgba(217, 220, 233, 0)),
      linear-gradient(#eff1f6 0%, #e7eaf2 25%, #dee0ea 48%, #e5e8f0 57%, #f7f8fb 66%, #fff 74%, #fdfdfe 88%, #f7f8fc 100%);
  }
  .tabrow { display: flex; justify-content: space-between; }
  .tabs { display: flex; height: 28px; }
  .tabs button { height: 28px; border-right: 1px solid #858585; border-bottom: 1px solid #858585; background: #d4d4d4; box-sizing: border-box; white-space: nowrap; color: #1d1d1d; }
  .tabs button.on { background: #f7f7f7; font-weight: 700; color: #333; }
  .mdi { display: flex; padding: 2px 7px 0 0; color: #9a9491; }
  .mdi button { width: 26px; height: 26px; }

  .body { flex: 1; display: flex; }
  .panel { width: 273px; flex: none; display: flex; flex-direction: column; background: #f7f7f7; border-right: 1px solid #858585; box-sizing: border-box; }
  .grip { height: 24px; margin-right: 2px; border-top: 1px solid #aaa; border-bottom: 1px solid #c4c4c4; display: flex; align-items: center; justify-content: center; box-shadow: inset 0 3px #f7f7f7, inset 0 4px #c4c4c4; }
  .grip i, .handle i { width: 4px; height: 4px; border: 1px solid #999; border-radius: 50%; background: #ccc; }
  .ptabs { display: flex; height: 27px; margin: 3px 2px 0 0; border-top: 1px solid #858585; box-sizing: border-box; }
  .ptabs button { width: 40px; background: #d4d4d4; border-right: 1px solid #858585; border-bottom: 1px solid #858585; box-sizing: border-box; }
  .ptabs button.on { width: 42px; padding-left: 4px; background: #f7f7f7; border-bottom-color: #f7f7f7; }
  .ptabs button.cut { width: 24px; border-right: 0; }
  .ptabs button.arrow { flex: 1; margin-top: 2px; background: #ececf0; border: 1px solid #b5b5b5; }
  .filter { height: 32px; margin: 0 5px; padding-left: 2px; justify-content: flex-start; border: 1px solid #bbb; box-sizing: border-box; }
  .filter .caret { margin-top: 8px; }
  .treewrap { flex: 1; display: flex; margin-right: 2px; border-left: 1px solid #c4c4c4; }
  .tree { flex: 1; min-width: 0; margin: 0; padding: 0; list-style: none; border-bottom: 4px solid #2f8bd0; }
  .tree li { display: flex; align-items: center; height: 24px; overflow: hidden; white-space: nowrap; }
  .tree li .ic { margin-right: 5px; }
  .tree .tw { width: 8px; margin: 0 11px 0 7px; }
  .tree .mate { padding-left: 49px; }
  .tree .off { color: #8d918f; }
  .tree .off .ic { filter: grayscale(1); opacity: 0.45; }
  .vbar { width: 19px; margin-left: 1px; display: flex; flex-direction: column; align-items: center; padding: 7px 0; background: #f0f0f0; box-sizing: border-box; }
  .vbar i { flex: 1; width: 19px; margin: 164px 0 6px; background: #cdcdcd; }
  .hbar { height: 19px; display: flex; align-items: center; margin: 1px 2px 0 1px; padding: 0 27px 0 6px; background: #f0f0f0; }
  .hbar i { width: 131px; height: 19px; margin: 0 auto 0 7px; background: #cdcdcd; }
  .panel::after { content: ""; height: 2px; margin: 2px 2px 0 0; border-top: 1px solid #bbb; border-bottom: 1px solid #bbb; }

  .viewport { position: relative; flex: 1; min-width: 0; }
  .handle { position: absolute; left: -1px; top: 380px; width: 11px; height: 49px; display: flex; align-items: center; justify-content: center; background: #f7f7f7; border: 1px solid #858585; border-left: 0; box-sizing: border-box; }
  .hud { display: flex; align-items: center; height: 20px; padding: 5px 0 0 643px; opacity: 0.8; }
  .hud button { width: 26px; }
  .hud .mini { width: 14px; }
  .wrench { position: absolute; left: 387px; top: 110px; }
  .triad { position: absolute; left: 15px; bottom: 28px; overflow: visible; }
  .triad text { font: 11px "Open Sans", sans-serif; }
  .side { position: absolute; right: 0; top: 29px; display: flex; flex-direction: column; border: 1px solid #858585; border-width: 1px 0 0 1px; }
  .side button { width: 32px; height: 30px; background: #d4d4d4; border-bottom: 1px solid #858585; box-sizing: border-box; }
  .side .on { background: #f7f7f7; }

  .sheets { display: flex; height: 21px; border-top: 1px solid #858585; border-bottom: 1px solid #858585; box-sizing: border-box; }
  .steps { display: flex; padding-left: 2px; background: #f7f7f7; }
  .steps button { width: 20px; background: #a9adb8; border: 1px solid #888; box-sizing: border-box; }
  .sheet { font-size: 15px; line-height: 18px; background: #d4d4d4; border-right: 1px solid #858585; box-sizing: border-box; padding-bottom: 2px; }
  .sheet.on { width: 77px; padding-left: 4px; background: #f7f7f7; font-weight: 700; }
  .sheet.views { width: 89px; }
  .sheet.study { width: 144px; padding-right: 12px; }

  .status { display: flex; align-items: center; height: 21px; padding: 0 3px 0 1px; }
  .product { margin-right: auto; }
  .st { margin-right: 20px; }
  .units { padding-left: 102px; margin-left: 3px; border-left: 1px solid #ccc; }
  .rise { margin: 0 26px 0 25px; }

  .taskbar { display: flex; height: 50px; background: #11110f; color: #fff; }
  .sys { width: 60px; }
  .pin { position: relative; width: 62px; box-sizing: border-box; }
  .sys + .pin { margin-left: 3px; }
  .pin::after { content: ""; position: absolute; left: 5px; right: 5px; bottom: 0; height: 3px; }
  .pin.open::after { background: #76b9ed; }
  .pin.active { background: #333; }
  .pin.active::after { left: 0; right: 0; background: #76b9ed; }
  .badge { position: absolute; left: 17px; top: 18px; width: 29px; text-align: center; }
  .badge b, .badge em { display: block; font: 700 14px/13px "Liberation Sans", sans-serif; }
  .badge em { font-size: 8px; line-height: 8px; padding-left: 11px; }
  .pin.clip { width: 51px; margin-left: 4px; padding-right: 2px; background: linear-gradient(90deg, #6d651d 40px, #2b2b29 40px); }
  .pin.clip::after { left: 0; right: 0; background: #ffc81c; }
  .num { position: absolute; left: 16px; top: 22px; color: #d0541a; font: 700 14px/20px "Liberation Sans", sans-serif; }
  .tray { display: flex; align-items: center; margin-left: auto; padding-right: 5px; box-shadow: inset -6px 0 #11110f, inset -7px 0 #555; }
  .tray button { width: 30px; height: 50px; }
  .lang { width: 42px; text-align: center; font: 16px/20px "DejaVu Sans", sans-serif; }
  time { width: 98px; text-align: center; font-size: 14px; line-height: 23px; }
  .tray .note { width: 50px; margin-right: 11px; background: #1d1d1b; }

  .mark { position: absolute; left: 0; right: 0; bottom: 19px; display: flex; flex-direction: column; align-items: center; color: rgba(185, 185, 185, 0.47); pointer-events: none; }
  .name { margin-bottom: -12px; font: 700 64px/76px "DejaVu Sans", sans-serif; }
  .site { font: 700 38px/44px "Liberation Sans", sans-serif; }
</style>
